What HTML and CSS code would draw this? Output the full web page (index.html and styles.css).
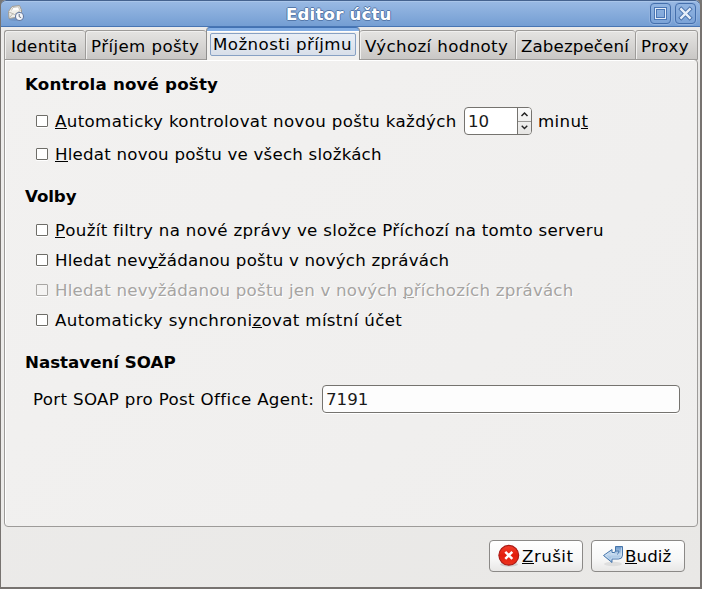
FILE: index.html
```html
<!DOCTYPE html>
<html lang="cs">
<head>
<meta charset="utf-8">
<title>Editor účtu</title>
<link rel="stylesheet" href="styles.css">
</head>
<body>
<div class="window">
  <header class="titlebar">
    <svg class="app-icon" width="18" height="18" viewBox="0 0 18 18">
      <ellipse cx="8" cy="14.500" rx="6" ry="1.500" fill="#6687b6" opacity=".5"/>
      <path d="M1.500 6.500 5 1.500l7.500-1 2 4.500v6.500L2 13.500z" fill="#efeee9" stroke="#a09c94"/>
      <path d="M4.500 5.500 6 2.500l5.500-.7 1 3.200" fill="#fff" stroke="#bbb8b0" stroke-width=".8"/>
      <path d="M2 7l5.500 2.500L13.500 5.500M2.500 12.500l3.500-4M13 11 9 8.500" fill="none" stroke="#b5b1a8" stroke-width=".9"/>
      <circle cx="12.500" cy="11.500" r="4" fill="#f4f6fa" stroke="#6279a2" stroke-width="1.100"/>
      <path d="M12.200 9v2.700l2 1" fill="none" stroke="#555f70" stroke-width=".9"/>
    </svg>
    <h1 class="title">Editor účtu</h1>
    <div class="controls">
      <button class="control"><svg width="19" height="19" viewBox="0 0 19 19"><rect x="3.500" y="3.500" width="12" height="12" fill="none" stroke="#4b77b5"/><rect x="4.500" y="4.500" width="10" height="10" fill="none" stroke="#e3ecf8"/><rect x="5.500" y="5.500" width="8" height="8" fill="none" stroke="#4b77b5"/></svg></button>
      <button class="control"><svg width="19" height="19" viewBox="0 0 19 19"><path d="M3.800 3.800l11.400 11.400M15.200 3.800 3.800 15.200" stroke="#466fa9" stroke-width="4.200"/><path d="M4.400 4.400l10.200 10.200M14.600 4.400 4.400 14.600" stroke="#e6eef9" stroke-width="2.400"/></svg></button>
    </div>
  </header>
  <nav class="tabs">
    <div class="tab t-identity"><span>Identita</span></div>
    <div class="tab t-incoming"><span>Příjem pošty</span></div>
    <div class="tab t-options active"><span>Možnosti příjmu</span></div>
    <div class="tab t-defaults"><span>Výchozí hodnoty</span></div>
    <div class="tab t-security"><span>Zabezpečení</span></div>
    <div class="tab t-proxy"><span>Proxy</span></div>
  </nav>
  <main class="panel">
    <h2>Kontrola nové pošty</h2>
    <div class="row interval"><i class="box"></i><span class="label l-auto"><u>A</u>utomaticky kontrolovat novou poštu každých</span>
      <div class="spin"><span class="value">10</span><div class="arrows">
        <svg width="13" height="13" viewBox="0 0 13 13"><path d="M3.500 8 6.500 5l3 3" fill="none" stroke="#222" stroke-width="1.500"/></svg>
        <svg width="13" height="13" viewBox="0 0 13 13"><path d="M3.500 4 6.500 7l3-3" fill="none" stroke="#222" stroke-width="1.500"/></svg>
      </div></div><span class="label l-min">minu<u>t</u></span></div>
    <div class="row search"><i class="box"></i><span class="label l-search"><u>H</u>ledat novou poštu ve všech složkách</span></div>
    <h2 class="h-options">Volby</h2>
    <div class="row"><i class="box"></i><span class="label l-filter"><u>P</u>oužít filtry na nové zprávy ve složce Příchozí na tomto serveru</span></div>
    <div class="row"><i class="box"></i><span class="label l-junk">Hledat nev<u>y</u>žádanou poštu v nových zprávách</span></div>
    <div class="row disabled"><i class="box"></i><span class="label l-inbox">Hledat nevyžádanou poštu jen v nových <u>p</u>říchozích zprávách</span></div>
    <div class="row"><i class="box"></i><span class="label l-sync">Automaticky synchroni<u>z</u>ovat místní účet</span></div>
    <h2 class="h-soap">Nastavení SOAP</h2>
    <div class="port"><span class="label l-port">Port SOAP pro Post Office Agent:</span><div class="entry">7191</div></div>
  </main>
  <footer class="actions">
    <button class="action">
      <svg width="22" height="24" viewBox="0 0 22 24"><defs><linearGradient id="red" x2="0" y2="1"><stop stop-color="#f4402e"/><stop offset=".5" stop-color="#e21d0c"/><stop offset="1" stop-color="#ee3420"/></linearGradient></defs><ellipse cx="11" cy="20.500" rx="9" ry="2.200" fill="#d0d0d0"/><circle cx="10.800" cy="11.300" r="9.900" fill="url(#red)" stroke="#ab1a15" stroke-width="1.200"/><path d="M7.300 7.800l7 7M14.300 7.800l-7 7" stroke="#fff" stroke-width="2.500"/></svg>
      <span class="label l-cancel"><u>Z</u>rušit</span>
    </button>
    <button class="action enter">
      <svg width="22" height="24" viewBox="0 0 22 24"><defs><linearGradient id="blue" x2="0" y2="1"><stop stop-color="#6795c9"/><stop offset=".5" stop-color="#c3d8ee"/><stop offset="1" stop-color="#78a5d5"/></linearGradient></defs><ellipse cx="11" cy="20" rx="9" ry="2.200" fill="#dedede"/><path d="M13.500 2.500h7v8.500q0 4-4 4H10v3.500L1.500 11.500 10 5.500V8.500h2q1.500 0 1.500-1.500z" fill="url(#blue)" stroke="#4675aa" stroke-linejoin="round"/><path d="M14 7h3q0 2.500-2 3.500" fill="none" stroke="#4675aa" stroke-width=".9"/><path d="M19.500 3.500V11q0 3-3 3H9v2.200L3.200 11.500 9 7.500v2h3" fill="none" stroke="#d6e5f5" stroke-width=".7"/></svg>
      <span class="label l-ok"><u>B</u>udiž</span>
    </button>
  </footer>
</div>
</body>
</html>
```
FILE: styles.css
```css
* { box-sizing: border-box; }
body { margin: 0; background: #777; font: 16.67px/20px "DejaVu Sans", sans-serif; color: #000; }
h1, h2 { margin: 0; font-size: 16.67px; line-height: 20px; font-weight: bold; white-space: nowrap; }
h2 { letter-spacing: .18px; }
button { font: inherit; color: inherit; margin: 0; padding: 0; }
svg { display: block; flex: none; }
u { text-decoration: none; box-shadow: inset 0 -1px #000; display: inline-block; height: 17px; line-height: 20px; vertical-align: top; }
.label { white-space: nowrap; height: 22px; padding-top: 2px; }
.window { width: 702px; height: 589px; display: flex; flex-direction: column; border: solid #777370; border-width: 0 2px 2px 1px; border-radius: 6px 6px 0 0; overflow: hidden; background: linear-gradient(135deg, #edeceb, #e9e8e6); }
.titlebar { height: 27px; flex: none; margin: 0 -1px 0 -1px; display: flex; align-items: flex-start; border: 1px solid #45638f; border-bottom-color: #4875b3; border-radius: 6px 6px 0 0; background: linear-gradient(#9abae4, #749ed3); box-shadow: inset 0 1px #a9c5e9; }
.app-icon { margin: 4px 0 0 6px; }
.title { width: 629px; padding-left: 261px; letter-spacing: .15px; margin-top: 4px; color: #fff; text-shadow: 1px 0 #5579aa, -1px 0 #5579aa, 0 1px #5579aa, 0 -1px #5579aa; }
.controls { margin-left: auto; display: flex; gap: 4px; padding: 2px 4px 0 0; }
.control { width: 21px; height: 21px; border: 1px solid #446fac; border-radius: 4px; background: linear-gradient(#91b4e1, #7ba3d7); box-shadow: 0 0 0 1px #91b2de; }
.tabs { height: 33px; flex: none; display: flex; align-items: flex-end; padding-left: 3px; position: relative; z-index: 1; }
.tab { height: 30px; flex: none; padding: 3px 0 0 6px; display: flex; align-items: center; border: solid #9d9b99; border-width: 1px 0 1px 1px; border-radius: 3px 3px 0 0; background: linear-gradient(#e5e4e2, #c9c7c5); white-space: nowrap; box-shadow: inset 1px 1px #f1f0ef; }
.t-identity { width: 81px; letter-spacing: .3px; }
.t-incoming { width: 121px; padding-left: 5px; letter-spacing: .4px; }
.t-options { width: 154px; letter-spacing: .42px; }
.t-defaults { width: 155px; padding-left: 5px; border-left: 0; letter-spacing: .36px; }
.t-security { width: 120px; padding-left: 5px; letter-spacing: .12px; }
.t-proxy { width: 63px; padding-left: 5px; border-right-width: 1px; letter-spacing: .5px; }
.active { height: 33px; border: 1px solid #4272b3; border-bottom: 0; border-color: #4272b3 #8f8e8d; border-radius: 4px 4px 0 0; background: linear-gradient(#83aee4 0 3px, #fff 3px 4px, #f1f0ee 4px); align-items: flex-start; padding: 5px 0 0 3px; box-shadow: none; }
.active span { width: 146px; height: 23px; padding-left: 2px; line-height: 21px; border: 1px solid #87a1c4; border-radius: 2px; background: linear-gradient(#e9eef5, #d8dfe9); }
.panel { margin: -1px 2px 0 3px; height: 468px; flex: none; border: 1px solid #9d9b99; border-radius: 0 4px 4px 4px; padding: 15px 17px 0 20px; background: linear-gradient(135deg, #f2f1f0, #efeeed); box-shadow: inset 1px 1px #fff; }
.row { display: flex; align-items: center; height: 30px; padding-left: 11px; }
.box { width: 12px; height: 12px; flex: none; margin-right: 7px; border: 1px solid #6e6d68; border-radius: 1px; background: #fff; box-shadow: 0 1px #fff; }
.interval { margin-top: 11px; }
.search { margin-top: 3px; }
.h-options { margin-top: 18px; margin-bottom: 8px; letter-spacing: -.1px; }
.h-soap { margin-top: 18px; letter-spacing: 0; }
.l-auto { width: 403px; letter-spacing: .36px; }
.l-search { letter-spacing: .21px; }
.l-filter { letter-spacing: .3px; }
.l-junk { letter-spacing: .21px; }
.l-inbox { letter-spacing: .21px; }
.l-sync { letter-spacing: .34px; }
.l-min { letter-spacing: .35px; }
.l-cancel { letter-spacing: .45px; }
.l-ok { letter-spacing: .1px; }
.spin { width: 68px; height: 28px; margin: 0 6px; display: flex; border: 1px solid #75736f; border-radius: 4px; background: #fff; overflow: hidden; }
.value { width: 52px; padding: 4px 0 0 3px; color: #1a1a1a; }
.arrows { width: 14px; border-left: 1px solid #75736f; background: linear-gradient(#fafafa, #e6e5e3); }
.arrows svg + svg { border-top: 1px solid #9a9895; }
.disabled { color: #a6a4a2; text-shadow: 1px 1px #fff; }
.disabled .box { border-color: #a8a6a3; background: #f4f3f2; }
.disabled u { box-shadow: inset 0 -1px #a6a4a2; }
.port { margin-top: 12px; padding-left: 8px; display: flex; align-items: center; }
.l-port { flex: none; width: 289px; letter-spacing: .34px; }
.entry { flex: 1; height: 28px; padding: 4px 3px; color: #1a1a1a; border: 1px solid #75736f; border-radius: 4px; background: #fdfdfd; box-shadow: 0 1px #fff; }
.actions { display: flex; justify-content: flex-end; gap: 8px; padding: 13px 15px 0 0; }
.action { width: 94px; height: 32px; display: flex; align-items: center; padding-left: 8px; gap: 2px; text-align: left; border: 1px solid #8b8987; border-radius: 4px; background: linear-gradient(#fff, #f7f7f7 60%, #e8e7e6); }
.enter { padding-left: 10px; gap: 1px; }
```
